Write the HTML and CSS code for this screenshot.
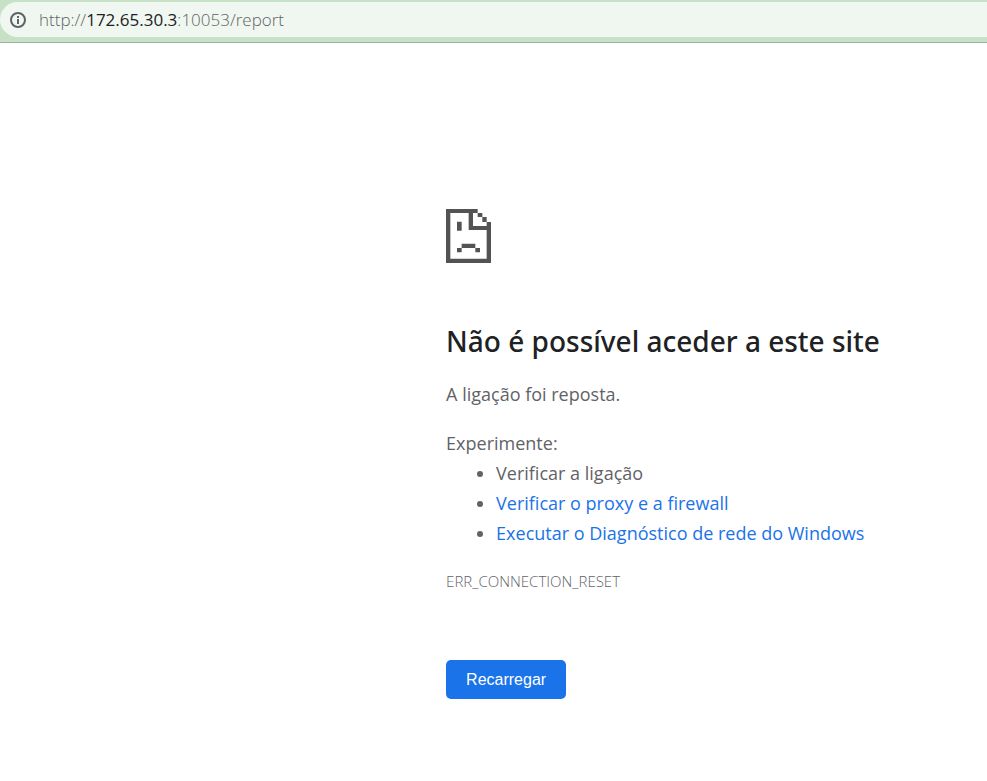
FILE: index.html
```html
<!DOCTYPE html>
<html lang="pt">

<head>
  <meta charset="UTF-8" />
  <meta name="viewport" content="width=device-width, initial-scale=1.0" />
  <title>172.65.30.3</title>
  <link rel="stylesheet" href="styles.css">
</head>

<body>
  <header class="toolbar">
    <div class="address">
      <svg class="info" viewBox="0 0 16 16" aria-hidden="true">
        <circle cx="8" cy="8" r="7" fill="none" stroke="#5f6368" stroke-width="2" />
        <path fill="#5f6368" d="M7 4h2v2H7zM7 7h2v5H7z" />
      </svg>
      <span class="url">http://<span class="host">172.65.30.3</span>:10053/report</span>
    </div>
  </header>
  <main class="error">
    <!-- sad page icon -->
    <svg class="icon" viewBox="0 0 135 162" aria-hidden="true">
      <path fill="#535353" d="M0 0h95v12H81v39h54v111H0zM13 12v137h109V63H68V12zM95 12h14v12H95zM109 24h13v15h-13zM122 39h13v12h-13zM33 38h14v27H33zM47 104h41v13H47zM33 117h14v13H33zM88 117h14v13H88z" fill-rule="evenodd" />
    </svg>
    <h1>Não é possível aceder a este site</h1>
    <p>A ligação foi reposta.</p>
    <div class="suggestions">
      <p>Experimente:</p>
      <ul>
        <li>Verificar a ligação</li>
        <li><a href="#">Verificar o proxy e a firewall</a></li>
        <li><a href="#">Executar o Diagnóstico de rede do Windows</a></li>
      </ul>
    </div>
    <div class="code">ERR_CONNECTION_RESET</div>
    <button class="reload" type="button">Recarregar</button>
  </main>
</body>

</html>
```
FILE: styles.css
```css
* {
  margin: 0;
  padding: 0;
  box-sizing: border-box;
}

body {
  background: #fff;
  color: #5f6368;
  font-family: "Segoe UI", "Open Sans", "Noto Sans", sans-serif;
  font-size: 18px;
  line-height: 30px;
}

a {
  color: #1a73e8;
  text-decoration: none;
}

.toolbar {
  padding: 2px 0 5px;
  background: #c6e1c6;
  border-bottom: 1px solid #9db39d;
}

.address {
  display: flex;
  align-items: center;
  gap: 13px;
  height: 35px;
  padding-left: 10px;
  background: #f0f7f0;
  border-radius: 18px 0 0 18px;
}

.info {
  width: 16px;
  height: 16px;
}

.url {
  font-size: 17px;
  font-weight: 300;
}

.host {
  color: #202124;
  font-weight: 400;
}

.error {
  padding: 166px 16px 0 45.2%;
}

.icon {
  display: block;
  width: 45px;
  height: 54px;
}

h1 {
  margin: 60px 0 20px;
  color: #202124;
  font-family: "Segoe UI", "Noto Sans", sans-serif;
  font-size: 28px;
  font-weight: 500;
  line-height: 36px;
}

.suggestions {
  margin-top: 19px;
}

ul {
  padding-left: 50px;
}

.code {
  margin-top: 18px;
  font-size: 15px;
  font-weight: 300;
}

.reload {
  display: block;
  margin-top: 64px;
  padding: 0 20px;
  height: 39px;
  border: 0;
  border-radius: 5px;
  background: #1a73e8;
  color: #fff;
  font-family: "Liberation Sans", Arial, sans-serif;
  font-size: 16px;
  cursor: pointer;
}
```
